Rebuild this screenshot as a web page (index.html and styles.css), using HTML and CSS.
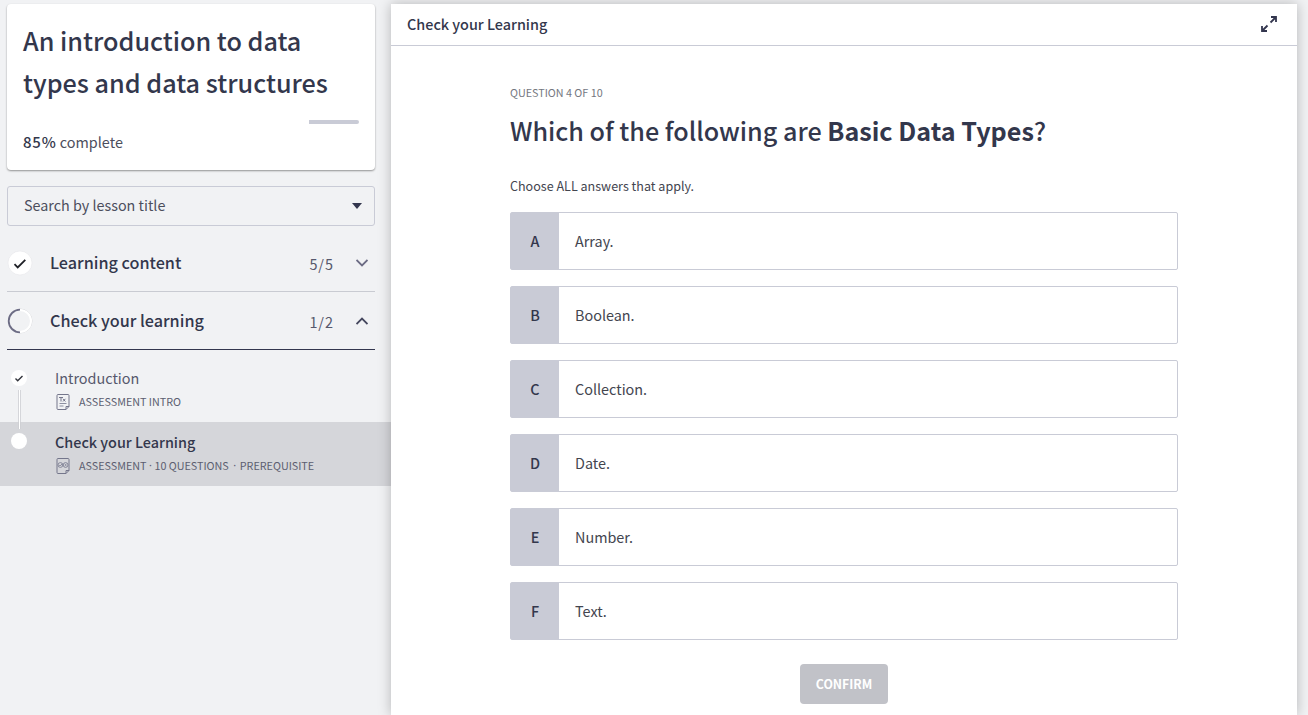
FILE: index.html
```html
<!DOCTYPE html>
<html lang="en">
<head>
<meta charset="utf-8">
<title>Check your Learning</title>
<link rel="stylesheet" href="styles.css">
</head>
<body>
<div class="app">
  <aside class="sidebar">
    <section class="course">
      <h1 class="course-title"><span>An introduction to data</span><br><span>types and data structures</span></h1>
      <div class="progress"><div class="progress-rest"></div></div>
      <p class="course-status"><b>85%</b> complete</p>
    </section>
    <div class="search"><span>Search by lesson title</span>
      <svg width="10" height="6" viewBox="0 0 10 6"><path d="M0 0h10L5 6z" fill="#33364e"/></svg>
    </div>
    <div class="group">
      <svg class="group-mark" width="26" height="26" viewBox="0 0 26 26"><circle cx="13" cy="13" r="12" fill="#fff" stroke="#e5e6e9" stroke-width=".6"/><path d="M7.500 14.200l3.200 3.200 7.600-7.600" fill="none" stroke="#1f2127" stroke-width="1.800"/></svg>
      <span class="group-name">Learning content</span><span class="count">5/5</span>
      <svg width="12" height="8" viewBox="0 0 12 8"><path d="M.5 1L6 6.500 11.500 1" fill="none" stroke="#6c6c84" stroke-width="1.800"/></svg>
    </div>
    <div class="group group-open">
      <svg class="group-mark" width="26" height="26" viewBox="0 0 26 26"><path d="M13 1a12 12 0 0 1 0 24" fill="none" stroke="#d9dadd" stroke-width="1"/><path d="M13 2a11 11 0 0 1 0 22" fill="none" stroke="#fff" stroke-width="2"/><path d="M13 1.700a11.300 11.300 0 0 0 0 22.600" fill="none" stroke="#6c6c84" stroke-width="1.800"/></svg>
      <span class="group-name">Check your learning</span><span class="count">1/2</span>
      <svg width="12" height="8" viewBox="0 0 12 8"><path d="M.5 7L6 1.500 11.500 7" fill="none" stroke="#45475e" stroke-width="1.800"/></svg>
    </div>
    <div class="lessons">
      <div class="lesson">
        <svg class="track" width="18" height="64" viewBox="0 0 18 64"><circle cx="9" cy="20" r="8" fill="#fff"/><path d="M5.500 20.500l2.200 2.200 4.800-4.800" fill="none" stroke="#33353d" stroke-width="1.400"/><path d="M8.500 32v32M10.500 32v32" stroke="#d5d6da"/><path d="M9.500 32v32" stroke="#fff"/></svg>
        <div class="lesson-text"><div class="lesson-name">Introduction</div>
          <div class="lesson-meta"><svg width="14" height="16" viewBox="0 0 14 16" fill="none" stroke="#74768b"><path d="M2 .5h10a1 1 0 0 1 1 1v11l-3 3H2a1 1 0 0 1-1-1v-13a1 1 0 0 1 1-1zM10 15.500v-3h3"/><path d="M3 3.500h4M5 3.500v4M7 4.800l2.400 2.700M9.400 4.800L7 7.500"/><path d="M3.500 9.500h7M3.500 12h4" stroke-width=".8"/></svg><span>ASSESSMENT INTRO</span></div></div>
      </div>
      <div class="lesson lesson-current">
        <svg class="track" width="18" height="64" viewBox="0 0 18 64"><path d="M8.500 0v7M10.500 0v7" stroke="#cfd0d4"/><path d="M9.500 0v7" stroke="#fff"/><circle cx="9" cy="19" r="8" fill="#fff"/></svg>
        <div class="lesson-text"><div class="lesson-name">Check your Learning</div>
          <div class="lesson-meta"><svg width="14" height="16" viewBox="0 0 14 16" fill="none" stroke="#74768b"><path d="M2 .5h10a1 1 0 0 1 1 1v11l-3 3H2a1 1 0 0 1-1-1v-13a1 1 0 0 1 1-1zM10 15.500v-3h3"/><g stroke-width=".8"><circle cx="4.400" cy="7" r="2.400"/><circle cx="9.600" cy="7" r="2.400"/><path d="M3.200 7l1 1 2-2.200M8.700 6.100l1.800 1.800M10.500 6.100L8.700 7.900"/></g></svg><span>ASSESSMENT</span><span class="meta-dot">·</span><span>10 QUESTIONS</span><span class="meta-dot meta-dot-wide">·</span><span>PREREQUISITE</span></div></div>
      </div>
    </div>
  </aside>
  <main class="panel">
    <header class="panel-head"><span>Check your Learning</span>
      <svg width="16" height="16" viewBox="0 0 16 16" fill="none" stroke="#33364e" stroke-width="1.800"><path d="M9.500 6.500L15 1M10 1h5v5M6.500 9.500L1 15M1 10v5h5"/></svg>
    </header>
    <div class="quiz">
      <p class="step">QUESTION 4 OF 10</p>
      <h2 class="question">Which of the following are <b>Basic Data Types</b>?</h2>
      <p class="hint">Choose ALL answers that apply.</p>
      <div class="answers">
        <div class="answer"><span class="letter">A</span><span class="answer-text">Array.</span></div>
        <div class="answer"><span class="letter">B</span><span class="answer-text">Boolean.</span></div>
        <div class="answer"><span class="letter">C</span><span class="answer-text">Collection.</span></div>
        <div class="answer"><span class="letter">D</span><span class="answer-text">Date.</span></div>
        <div class="answer"><span class="letter">E</span><span class="answer-text">Number.</span></div>
        <div class="answer"><span class="letter">F</span><span class="answer-text">Text.</span></div>
      </div>
      <button class="confirm">CONFIRM</button>
    </div>
  </main>
</div>
</body>
</html>
```
FILE: styles.css
```css
* { box-sizing: border-box; }
body { margin: 0; background: #f1f2f4; color: #33374c; font-family: "Noto Sans CJK SC", "Noto Sans", sans-serif; overflow: hidden; }
h1, h2, p { margin: 0; }
svg { flex: none; display: block; }
.app { display: flex; height: 715px; padding-right: 11px; }
.sidebar { width: 391px; flex: none; padding-top: 4px; }
.course { margin: 0 16px 0 7px; width: 368px; height: 166px; padding: 15px 16px 0; background: #fff; border-radius: 4px; box-shadow: 0 1px 2px rgba(0,0,0,.4); }
.course-title { font-size: 25.2px; line-height: 42px; font-weight: 500; white-space: nowrap; }
.progress { display: flex; justify-content: flex-end; margin-top: 17px; height: 4px; }
.progress-rest { width: 50px; background: #c9cbd6; border-radius: 0 2px 2px 0; }
.course-status { margin-top: 7px; font-size: 14.4px; line-height: 22px; color: #4c4e5d; }
.course-status b { font-weight: 500; font-size: 15px; letter-spacing: .8px; color: #33374c; }
.search { margin: 16px 16px 0 7px; width: 368px; height: 40px; padding: 0 12px 0 16px; border: 1px solid #c9cbd6; border-radius: 3px; display: flex; align-items: center; justify-content: space-between; font-size: 14.35px; color: #4c4e5d; }
.search span { padding-bottom: 3px; }
.group { display: flex; align-items: center; margin: 8px 16px 0 7px; height: 58px; width: 368px; padding-right: 7px; border-bottom: 1px solid #c9cbd2; }
.group-open { margin-top: 0; border-bottom-color: #33364e; }
.group-name { margin-left: 17px; flex: 1; padding-bottom: 2px; font-size: 16.2px; font-weight: 500; }
.count { font-size: 14.4px; margin-right: 22px; padding-top: 1px; color: #56586c; letter-spacing: 1px; }
.lessons { padding-top: 8px; }
.lesson { display: flex; height: 64px; padding-left: 10px; }
.lesson-current { background: #d5d6da; }
.lesson-text { margin-left: 27px; padding-top: 9px; }
.lesson-name { font-size: 14.4px; line-height: 21px; color: #56586c; }
.lesson-current .lesson-name { font-weight: 500; color: #33374c; }
.lesson-meta { display: flex; align-items: center; margin-top: 4px; height: 18px; font-size: 10.75px; color: #5c5e70; }
.lesson-meta svg { margin: 1px 9px 0 1px; }
.meta-dot { width: 8px; text-align: center; font-family: "Noto Sans", sans-serif; }
.meta-dot-wide { width: 11px; padding-left: 1px; }
.panel { flex: 1; margin-top: 4px; background: #fff; box-shadow: 0 0 12px rgba(0,0,0,.25); }
.panel-head { height: 42px; padding: 0 20px 2px 16px; border-bottom: 1px solid #c9cbd6; display: flex; align-items: center; justify-content: space-between; font-size: 14.4px; font-weight: 500; }
.quiz { width: 668px; margin-left: 119px; padding-top: 38px; display: flex; flex-direction: column; }
.step { font-size: 10.75px; line-height: 18px; color: #74777f; }
.question { margin-top: 8px; font-size: 25.15px; line-height: 40px; font-weight: 500; white-space: nowrap; }
.question b { font-weight: 700; }
.hint { margin-top: 25px; font-size: 12.55px; line-height: 22px; color: #43454f; }
.answers { margin-top: 15px; display: grid; gap: 16px; }
.answer { display: flex; height: 58px; border: 1px solid #c9cbd6; border-radius: 2px; align-items: stretch; }
.letter { width: 48px; padding-bottom: 2px; background: #c9cbd6; display: flex; align-items: center; justify-content: center; font-size: 14.4px; font-weight: 500; }
.answer-text { padding: 0 0 2px 16px; display: flex; align-items: center; font-size: 14.4px; color: #43454f; }
.confirm { align-self: center; margin-top: 24px; width: 88px; height: 40px; padding: 0; border: 0; border-radius: 4px; background: #c1c2c8; color: #fff; font-family: inherit; font-size: 12.3px; font-weight: 700; }
```
